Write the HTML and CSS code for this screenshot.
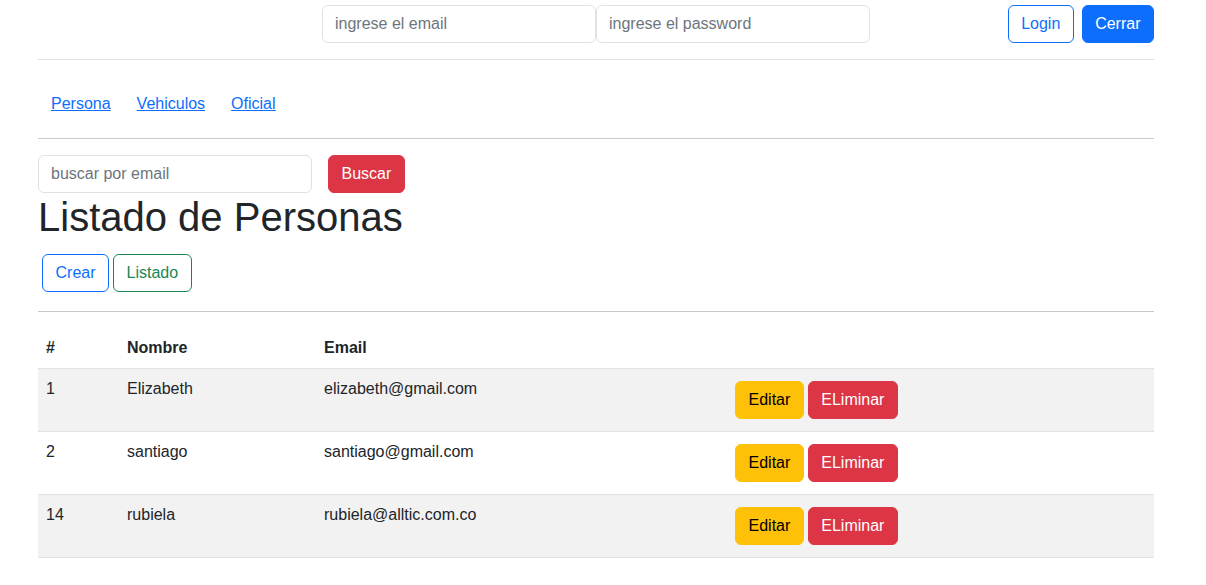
FILE: index.html
```html
<!DOCTYPE html>
<html lang="es">
<head>
<meta charset="utf-8">
<title>Listado de Personas</title>
<link rel="stylesheet" href="styles.css">
</head>
<body>
<div class="page">
  <header class="topbar">
    <div class="login-form">
      <input class="field field-top" type="text" placeholder="ingrese el email">
      <input class="field field-top" type="password" placeholder="ingrese el password">
    </div>
    <div class="top-actions">
      <button class="btn btn-outline-primary btn-login">Login</button>
      <button class="btn btn-primary">Cerrar</button>
    </div>
  </header>

  <nav class="menu">
    <a class="menu-link" href="#">Persona</a>
    <a class="menu-link" href="#">Vehiculos</a>
    <a class="menu-link" href="#">Oficial</a>
  </nav>
  <hr class="rule rule-menu">

  <div class="search">
    <input class="field field-search" type="text" placeholder="buscar por email">
    <button class="btn btn-danger">Buscar</button>
  </div>

  <h1 class="title">Listado de Personas</h1>

  <div class="tabs">
    <button class="btn btn-outline-primary">Crear</button>
    <button class="btn btn-outline-success">Listado</button>
  </div>
  <hr class="rule">

  <table class="grid">
    <thead>
      <tr>
        <th class="col-id">#</th>
        <th class="col-name">Nombre</th>
        <th class="col-email">Email</th>
        <th></th>
      </tr>
    </thead>
    <tbody>
      <tr class="striped">
        <td>1</td>
        <td>Elizabeth</td>
        <td>elizabeth@gmail.com</td>
        <td class="actions"><div class="action-group"><button class="btn btn-warning">Editar</button><button class="btn btn-danger">ELiminar</button></div></td>
      </tr>
      <tr>
        <td>2</td>
        <td>santiago</td>
        <td>santiago@gmail.com</td>
        <td class="actions"><div class="action-group"><button class="btn btn-warning">Editar</button><button class="btn btn-danger">ELiminar</button></div></td>
      </tr>
      <tr class="striped">
        <td>14</td>
        <td>rubiela</td>
        <td>rubiela@alltic.com.co</td>
        <td class="actions"><div class="action-group"><button class="btn btn-warning">Editar</button><button class="btn btn-danger">ELiminar</button></div></td>
      </tr>
    </tbody>
  </table>
</div>
</body>
</html>
```

FILE: styles.css
```css
* {
  box-sizing: border-box;
}

body {
  margin: 0;
  font-family: "Liberation Sans", Arial, sans-serif;
  font-size: 16px;
  line-height: 1.5;
  color: #212529;
  background: #fff;
}

.page {
  width: 1116px;
  margin-left: 38px;
}

/* top bar */
.topbar {
  display: flex;
  align-items: center;
  padding: 5px 0 16px;
  border-bottom: 1px solid #dee2e6;
}

.login-form {
  display: flex;
  margin-left: 284px;
}

.top-actions {
  display: flex;
  gap: 8px;
  margin-left: auto;
}

/* inputs */
.field {
  height: 38px;
  padding: 6px 12px;
  font-family: inherit;
  font-size: 16px;
  line-height: 24px;
  color: #212529;
  background: #fff;
  border: 1px solid #dee2e6;
  border-radius: 6px;
  outline: none;
}

.field::placeholder {
  color: #6c757d;
  opacity: 1;
}

.field-top,
.field-search {
  width: 274px;
}

/* buttons */
.btn {
  height: 38px;
  padding: 6px 12.5px;
  font-family: inherit;
  font-size: 16px;
  line-height: 24px;
  border: 1px solid transparent;
  border-radius: 6px;
  background: transparent;
  cursor: pointer;
}

.btn-login {
  width: 66px;
}

.btn-primary {
  background: #0d6efd;
  border-color: #0d6efd;
  color: #fff;
}

.btn-outline-primary {
  border-color: #0d6efd;
  color: #0d6efd;
}

.btn-outline-success {
  border-color: #198754;
  color: #198754;
}

.btn-danger {
  background: #dc3545;
  border-color: #dc3545;
  color: #fff;
}

.btn-warning {
  background: #ffc107;
  border-color: #ffc107;
  color: #000;
}

/* menu */
.menu {
  display: flex;
  padding: 24px 0 14px;
}

.menu-link {
  padding: 8px 13px;
  color: #0d6efd;
  text-decoration: underline;
}

.rule {
  margin: 16px 0;
  border: 0;
  border-top: 1px solid #c8c9ca;
}

.rule-menu {
  margin-top: 0;
}

/* search */
.search {
  display: flex;
  gap: 16px;
}

.title {
  margin: 0 0 8px;
  font-size: 40px;
  font-weight: 500;
  line-height: 1.2;
}

.tabs {
  display: flex;
  gap: 4px;
  padding: 5px 0 3px 4px;
}

/* table */
.grid {
  width: 100%;
  border-collapse: collapse;
}

.grid th,
.grid td {
  padding: 8px;
  text-align: left;
  vertical-align: top;
  border-bottom: 1px solid #dee2e6;
}

.grid th {
  font-weight: bold;
}

.col-id {
  width: 81px;
}

.col-name {
  width: 197px;
}

.col-email {
  width: 411px;
}

.grid tr.striped td {
  background: #f2f2f2;
}

.grid td.actions {
  padding: 12px 8px;
}

.action-group {
  display: flex;
  gap: 4px;
}
```
